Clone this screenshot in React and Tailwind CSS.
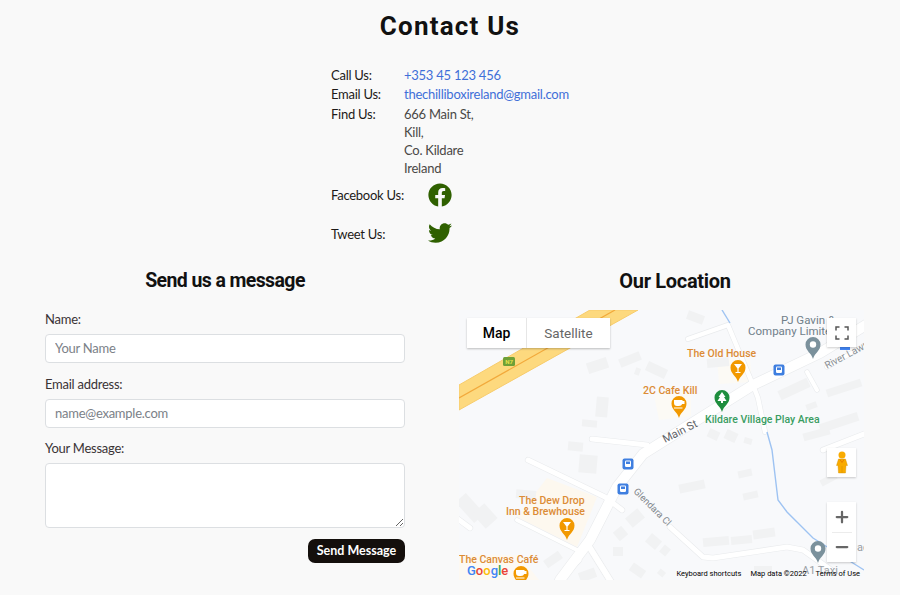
import React from "react";
import { FaFacebook, FaTwitter } from "react-icons/fa";
import { Plus, Minus } from "lucide-react";

// tip of the pin is at x,y
const Pin = ({ x, y, color, children }) => (
  <g transform={`translate(${x} ${y})`}>
    <path d="M0 0C-1.5-6-7.5-8-7.5-14.5A7.5 7.5 0 1 1 7.5-14.5C7.5-8 1.5-6 0 0Z" fill={color} />
    {children}
  </g>
);

const Bus = ({ x, y }) => (
  <g transform={`translate(${x} ${y})`}>
    <rect x="-5.5" y="-5.5" width="11" height="11" rx="2" fill="#3f7fe0" />
    <rect x="-3" y="-3.5" width="6" height="6.5" rx="1.2" fill="#fff" />
    <rect x="-2" y="-2.5" width="4" height="2.5" fill="#3f7fe0" />
  </g>
);

const Glass = () => <path d="M-4-18H4L0.6-13.5V-10H2.5V-9H-2.5V-10H-0.6V-13.5Z" fill="#fff" />;
const Cup = () => <path d="M-5-18H3.5V-17H5.5V-14H3.2Q2.5-12 0-12H-2Q-5-12-5-15ZM-5-10.5H3.5V-9.5H-5Z" fill="#fff" />;

// x, y, w, h, rotation
const buildings = [
  [128, 50, 21, 11, -18], [160, 45, 22, 9, -22], [176, 58, 5, 7, 20], [187, 55, 21, 10, 25],
  [137, 87, 12, 20, 5], [123, 110, 15, 7, 5], [228, 3, 17, 9, 20], [248, 48, 22, 9, -5],
  [319, 74, 32, 10, -25], [367, 74, 36, 8, -18], [360, 108, 40, 9, -18], [344, 120, 27, 8, -15],
  [347, 93, 11, 6, -20], [249, 120, 11, 9, 25], [266, 121, 12, 10, 25], [285, 128, 8, 6, 15],
  [220, 172, 26, 9, -12], [279, 160, 14, 7, -12], [284, 182, 15, 7, -12], [244, 227, 26, 9, -5],
  [272, 226, 21, 8, -5], [294, 219, 22, 9, -8], [361, 166, 17, 7, -28], [295, 256, 18, 7, 0],
  [109, 132, 15, 9, 5], [120, 145, 18, 18, 5], [57, 180, 20, 9, 5], [4, 184, 14, 28, -42],
  [18, 196, 16, 20, -42], [168, 202, 16, 12, -40], [156, 218, 11, 11, -40], [154, 237, 10, 9, 0],
  [188, 226, 13, 11, 40], [202, 236, 8, 9, 40], [171, 256, 15, 9, 35], [199, 260, 7, 6, 40],
  [85, 245, 18, 9, -35], [120, 260, 17, 10, -20],
];

const roads = [
  ["M101 270L131 230L158 177L184 144L211 127L294 75L361 43L410 13", 10],
  ["M229 29L269 15L294 75L299 88L306 122", 4.5],
  ["M69 150L146 187L163 200", 5],
  ["M133 129L188 135", 5],
  ["M58 210L118 240", 4],
  ["M131 238L154 275", 6],
  ["M-9 203L11 218", 5],
  ["M211 217L244 247L254 248L328 237L344 240L375 262", 5],
  ["M364 140L410 122", 5],
  ["M368 57L410 33", 4],
  ["M348 62L358 80", 4],
  ["M95 275L120 250", 5],
];

const MapArt = () => (
  <svg className="absolute inset-0" width="405" height="270" viewBox="0 0 405 270">
    <rect width="405" height="270" fill="#f8f9fb" />
    <path d="M88 168L138 187L118 237L58 207Z" fill="#fdf8ef" />
    <path d="M0 245H60L80 270H0Z" fill="#fdf9f2" />
    <path d="M258 47L291 49L293 72L260 74Z" fill="#fcfaf5" />
    <path d="M195 85L232 80L232 106L200 110Z" fill="#fcfaf5" />
    {buildings.map(([x, y, w, h, r], i) => (
      <rect key={i} x={x} y={y} width={w} height={h} fill="#f1f2f3" transform={`rotate(${r} ${x + w / 2} ${y + h / 2})`} />
    ))}
    <path d="M0 75L131 0H179L0 100Z" fill="#fdd97e" stroke="#f7cc6c" strokeWidth="1" />
    <path d="M0 88L156 0" stroke="#f2a93b" strokeWidth="1.2" fill="none" />
    <rect x="44" y="47" width="12" height="9" rx="1.5" fill="#6ea037" />
    <text x="50" y="54" textAnchor="middle" fontSize="6" fontWeight="700" fill="#e8e04a" fontFamily="Roboto, sans-serif">N7</text>
    <g fill="none" strokeLinecap="round" strokeLinejoin="round">
      {roads.map(([d, w], i) => <path key={i} d={d} stroke="#e9ebed" strokeWidth={w + 1.2} />)}
      {roads.map(([d, w], i) => <path key={i} d={d} stroke="#fff" strokeWidth={w} />)}
    </g>
    <g fill="none" stroke="#9ec3f2" strokeWidth="1.4">
      <path d="M263 0L271 13" />
      <path d="M308 122L313 140L319 190L328 202L354 228L405 260" />
    </g>
    <Bus x="320" y="60" />
    <Bus x="169" y="154" />
    <Bus x="164" y="179" />
    <g fontFamily="Roboto, sans-serif">
      <text fontSize="10" fill="#8a9096" transform="translate(368 59) rotate(-28)">River Lawn</text>
      <text fontSize="11" fill="#5f6368" transform="translate(206 133) rotate(-27)">Main St</text>
      <text fontSize="9.5" fill="#80868b" transform="translate(174 182) rotate(45)">Glendara Cl</text>
      <text x="322" y="14" fontSize="11.5" fill="#70808a">PJ Gavin &amp;</text>
      <text x="289" y="25" fontSize="11.5" fill="#70808a">Company Limited</text>
      <text x="343" y="264" fontSize="11" fill="#9aa0a6">A1 Taxi</text>
      <text x="398" y="241" fontSize="11" fill="#9aa0a6">ac</text>
      <g fontSize="10.5" fontWeight="500" fill="#dc8c36">
        <text x="228" y="47">The Old House</text>
        <text x="184" y="84">2C Cafe Kill</text>
        <text x="60" y="194">The Dew Drop</text>
        <text x="47" y="205">Inn &amp; Brewhouse</text>
        <text x="0" y="253">The Canvas Café</text>
      </g>
      <text x="246" y="113" fontSize="10.5" fontWeight="500" fill="#3a9d62">Kildare Village Play Area</text>
    </g>
    <Pin x="279" y="72" color="#f29900"><Glass /></Pin>
    <Pin x="220" y="108" color="#f29900"><Cup /></Pin>
    <Pin x="108" y="230" color="#f29900"><Glass /></Pin>
    <Pin x="62" y="278" color="#f29900"><Cup /></Pin>
    <Pin x="263" y="102" color="#1e8e3e">
      <path d="M0-20L3.5-15H2L4.5-11H1V-9H-1V-11H-4.5L-2-15H-3.5Z" fill="#fff" />
    </Pin>
    <Pin x="354" y="49" color="#7b919c"><circle cx="0" cy="-14.5" r="3.2" fill="#fff" /></Pin>
    <Pin x="359" y="253" color="#7b919c"><circle cx="0" cy="-14.5" r="3.2" fill="#fff" /></Pin>
    <rect x="381" y="37" width="10" height="3" fill="#4285f4" />
  </svg>
);

const InfoRow = ({ label, children }) => (
  <div className="grid grid-cols-[73px_1fr] text-[13px] leading-[18px] tracking-[-0.25px]">
    <span className="text-[#1d1a18]">{label}</span>
    <div className="text-[#4a4846]">{children}</div>
  </div>
);

const inputCls =
  "mt-[5px] block h-[29px] w-full rounded border border-[#dcdfe2] bg-white px-[9px] pb-px text-[13px] tracking-[-0.25px] placeholder:text-[#7b8188]";
const labelCls = "block text-[13px] leading-[20px] tracking-[-0.25px]";

const App = () => {
  return (
    <div className="h-[595px] overflow-hidden bg-[#f9f9f9] font-['Lato',sans-serif] text-[#3a3335]">
      <h1 className="pt-[8px] text-center font-['Roboto',sans-serif] text-[26px] leading-[36px] font-bold tracking-[1.2px] text-[#111]">
        Contact Us
      </h1>

      <div className="mt-[22px] ml-[331px] w-[300px]">
        <InfoRow label="Call Us:">
          <a className="text-[#3f6fd8]" href="#">+353 45 123 456</a>
        </InfoRow>
        <div className="mt-px">
          <InfoRow label="Email Us:">
            <a className="text-[#3f6fd8]" href="#">thechilliboxireland@gmail.com</a>
          </InfoRow>
        </div>
        <div className="mt-[2px]">
          <InfoRow label="Find Us:">
            666 Main St,<br />Kill,<br />Co. Kildare<br />Ireland
          </InfoRow>
        </div>
        <div className="mt-[6px] flex h-[24px] items-center text-[13px] tracking-[-0.25px] text-[#1d1a18]">
          <span className="w-[97px] pt-[2px]">Facebook Us:</span>
          <FaFacebook size={24} className="text-[#2f6000]" />
        </div>
        <div className="mt-[14px] flex h-[24px] items-center text-[13px] tracking-[-0.25px] text-[#1d1a18]">
          <span className="w-[97px] pt-[4px]">Tweet Us:</span>
          <FaTwitter size={24} className="-mt-px text-[#2f6000]" />
        </div>
      </div>

      <div className="mt-[23px] grid grid-cols-2">
        <div className="px-[45px]">
          <h2 className="text-center font-['Roboto',sans-serif] text-[19.5px] leading-[26px] font-bold tracking-[-0.6px] text-[#111]">
            Send us a message
          </h2>
          <label className={`${labelCls} mt-[15px]`}>Name:</label>
          <input placeholder="Your Name" className={inputCls} />
          <label className={`${labelCls} mt-[11px]`}>Email address:</label>
          <input placeholder="name@example.com" className={inputCls} />
          <label className={`${labelCls} mt-[10px]`}>Your Message:</label>
          <textarea className="mt-[5px] block h-[65px] w-full rounded border border-[#dcdfe2] bg-white" />
          <div className="mt-[11px] flex justify-end">
            <button className="h-[24px] w-[97px] rounded-[7px] bg-[#140f0c] text-[12.5px] font-bold text-white">
              Send Message
            </button>
          </div>
        </div>

        <div>
          <h2 className="text-center font-['Roboto',sans-serif] text-[20px] leading-[26px] font-bold tracking-[-0.3px] text-[#111]">
            Our Location
          </h2>
          <div className="relative mt-[16px] ml-[9px] h-[270px] w-[405px] overflow-hidden font-['Roboto',sans-serif]">
            <MapArt />
            <div className="absolute top-[8px] left-[8px] flex h-[30px] bg-white text-[14px] leading-[30px] shadow-[0_1px_2px_rgba(0,0,0,0.25)]">
              <span className="w-[60px] border-r border-[#e6e6e6] text-center font-medium text-black">Map</span>
              <span className="w-[83px] text-center text-[13.5px] text-[#666]">Satellite</span>
            </div>
            <div className="absolute top-[8px] right-[8px] flex h-[29px] w-[29px] items-center justify-center bg-white shadow-[0_1px_2px_rgba(0,0,0,0.2)]">
              <svg width="14" height="14" viewBox="0 0 14 14" fill="none" stroke="#555" strokeWidth="1.5">
                <path d="M1 4.5V1H4.5M9.5 1H13V4.5M13 9.5V13H9.5M4.5 13H1V9.5" />
              </svg>
            </div>
            <div className="absolute top-[138px] right-[8px] flex h-[29px] w-[29px] items-center justify-center bg-white shadow-[0_1px_2px_rgba(0,0,0,0.2)]">
              <svg width="12" height="23" viewBox="0 0 12 23">
                <circle cx="6" cy="4" r="3.5" fill="#f9ab00" />
                <path d="M2.5 8H9.5L11.5 14.5H10L9.5 22H2.5L2 14.5H0.5Z" fill="#f9ab00" stroke="#d18f00" strokeWidth="0.4" />
                <path d="M4 8.5L6 11.5L8 8.5" fill="none" stroke="#e37400" strokeWidth="0.8" />
                <path d="M6 15V22" stroke="#d18f00" strokeWidth="0.5" />
              </svg>
            </div>
            <div className="absolute top-[192px] right-[8px] flex h-[60px] w-[29px] flex-col items-center justify-between bg-white shadow-[0_1px_2px_rgba(0,0,0,0.2)]">
              <Plus size={18} strokeWidth={3} className="mt-[6px] text-[#666]" />
              <div className="h-px w-[20px] bg-[#ececec]" />
              <Minus size={18} strokeWidth={3} className="mb-[6px] text-[#666]" />
            </div>
            <span className="absolute bottom-[2px] left-[8px] font-['Roboto',sans-serif] text-[13px] leading-[14px] font-medium">
              <span className="text-[#4285f4]">G</span>
              <span className="text-[#ea4335]">o</span>
              <span className="text-[#fbbc05]">o</span>
              <span className="text-[#4285f4]">g</span>
              <span className="text-[#34a853]">l</span>
              <span className="text-[#ea4335]">e</span>
            </span>
            <div className="absolute right-[4px] bottom-0 flex gap-[9px] text-[7.5px] leading-[12px] whitespace-nowrap text-black">
              <span>Keyboard shortcuts</span>
              <span>Map data ©2022</span>
              <span>Terms of Use</span>
            </div>
          </div>
        </div>
      </div>
    </div>
  );
};

export default App;
